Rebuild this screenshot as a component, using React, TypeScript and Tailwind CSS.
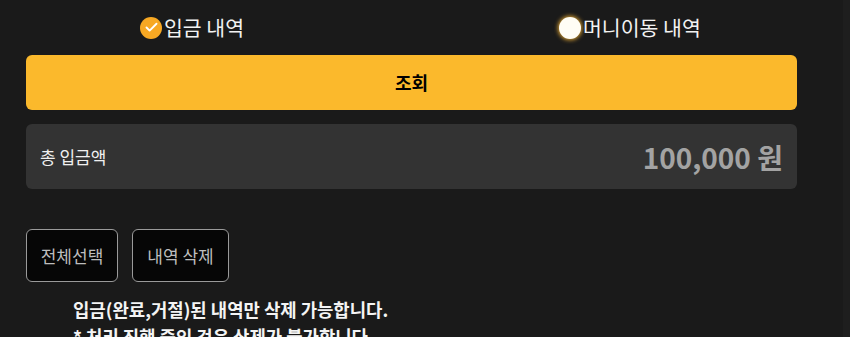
import { Check } from 'lucide-react';

const font = { fontFamily: '"Noto Sans CJK KR", "Noto Sans", sans-serif' };

export default function App() {
  return (
    <div className="w-[850px] h-[337px] overflow-hidden bg-[#1a1a1a] text-white relative" style={font}>
      <div className="absolute top-0 right-0 w-[7px] h-full bg-[#1e1e1e]" />
      <div className="px-[26px] w-[823px]">
        {/* radio tabs */}
        <div className="flex h-[55px] items-center">
          <div className="w-[419px] pl-[114px] flex items-center">
            <span className="w-[22px] h-[22px] rounded-full bg-[#f7a823] flex items-center justify-center">
              <Check size={15} strokeWidth={3} className="text-white" />
            </span>
            <span className="ml-[2px] text-[20.5px] leading-none text-[#f2f2f2]">입금 내역</span>
          </div>
          <div className="pl-[114px] flex items-center">
            <span className="w-[22px] h-[22px] rounded-full bg-[#fffdf5] shadow-[0_0_4px_1px_#e0a534]" />
            <span className="ml-[2px] text-[20.5px] leading-none text-[#f2f2f2]">머니이동 내역</span>
          </div>
        </div>

        <button className="w-full h-[55px] rounded-[6px] bg-[#fbb92c] text-black font-bold text-[18px]">
          조회
        </button>

        <div className="mt-[14px] h-[65px] rounded-[6px] bg-[#333333] flex items-center justify-between pl-[14px] pr-[14px]">
          <span className="text-[17px] text-[#f0f0f0]">총 입금액</span>
          <span className="text-[28px] font-bold text-[#a3a3a3]">100,000 원</span>
        </div>

        <div className="mt-[40px] flex gap-[14px]">
          <button className="w-[92px] h-[53px] rounded-[6px] border border-[#9a9a9a] bg-[#060606] text-[17px] text-[#bdbdbd]">
            전체선택
          </button>
          <button className="w-[97px] h-[53px] rounded-[6px] border border-[#9a9a9a] bg-[#060606] text-[17px] text-[#bdbdbd]">
            내역 삭제
          </button>
        </div>

        <div className="mt-[14px] pl-[47px] text-[17.8px] font-bold leading-[27px] text-[#f4f4f4]">
          <p>입금(완료,거절)된 내역만 삭제 가능합니다.</p>
          <p>* 처리 진행 중인 건은 삭제가 불가합니다.</p>
        </div>
      </div>
    </div>
  );
}
